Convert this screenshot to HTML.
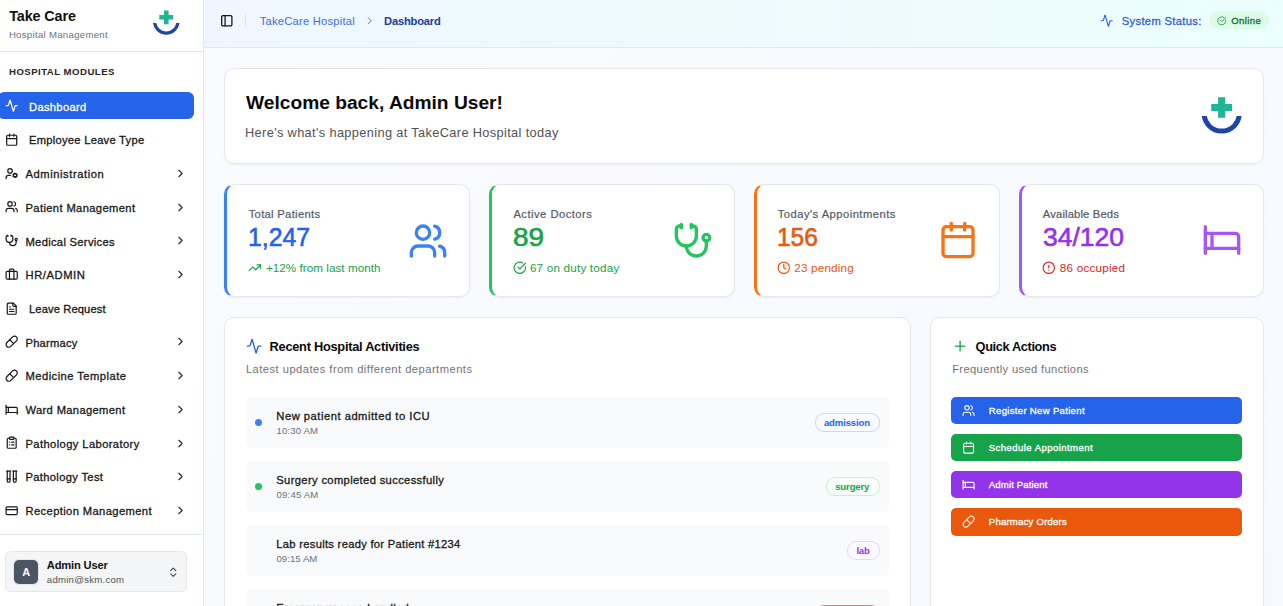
<!DOCTYPE html><html lang="en"><head>
<meta charset="utf-8">
<title>TakeCare Hospital - Dashboard</title>
<style>
*{box-sizing:border-box;margin:0;padding:0}
html,body{width:1283px;height:606px;overflow:hidden}
body{font-family:"Liberation Sans",sans-serif;color:#0a0a0a;background:#f9fbfe;position:relative}
svg{display:block}
.ico{position:absolute;fill:none;stroke:currentColor;stroke-width:2;stroke-linecap:round;stroke-linejoin:round}
.t{position:absolute;white-space:nowrap}
.md{font-weight:400;-webkit-text-stroke:0.3px currentColor}
.md2{font-weight:400;-webkit-text-stroke:0.18px currentColor}
.sb{font-weight:700}
.b{font-weight:700}
.num{font-weight:400;-webkit-text-stroke:0.6px currentColor}
#sidebar{position:absolute;left:0;top:0;width:204px;height:606px;background:#fff;border-right:1px solid #e5e7eb;overflow:hidden}
#sb-head{position:absolute;left:0;top:0;width:203px;height:52px;border-bottom:1px solid #e5e7eb}
#sb-foot{position:absolute;left:0;top:534px;width:203px;height:72px;border-top:1px solid #e5e7eb}
#active{position:absolute;left:-2px;top:92.3px;width:195.7px;height:26.8px;border-radius:6px;background:#2563eb}
#header{position:absolute;left:204px;top:0;width:1079px;height:48px;background:linear-gradient(90deg,#eff6ff 0%,#ecfeff 100%);border-bottom:1px solid #e2e8f0}
#main{position:absolute;left:204px;top:48px;width:1079px;height:558px;background:linear-gradient(135deg,#f9fbfe 0%,#f6fafe 100%);overflow:hidden}
.card{position:absolute;background:#fff;border-radius:10px;box-shadow:0 1px 2px rgba(0,0,0,.05)}
.card::before{content:"";position:absolute;inset:0;border:1px solid #e5e7eb;border-radius:10px;pointer-events:none}
.stat::before{border-left:3px solid var(--c)}
.row{position:absolute;background:#f9fafb;border-radius:6px}
.badge{position:absolute;border-radius:9px;border:1px solid}
.qa{position:absolute;border-radius:5px;color:#fff}
</style>
</head>
<body>
<svg width="0" height="0" style="position:absolute"><defs><clipPath id="lc"><rect x="0" y="22.1" width="48" height="24"></rect></clipPath></defs></svg>

<div id="sidebar">
<div id="sb-head">
<div class="t b" style="top: 7px; font-size: 14.4px; line-height: 18px; color: rgb(17, 17, 17); left: 9.2px; letter-spacing: -0.116px;">Take Care</div>
<div class="t " style="top: 27.5px; font-size: 9.6px; line-height: 13px; color: rgb(107, 114, 128); left: 8.9px; letter-spacing: 0.302px;">Hospital Management</div>
<svg style="position:absolute;left:150px;top:8px" width="32" height="29.33" viewBox="-0.7 -0.5 48 44"><circle cx="23.7" cy="19.42" r="17.64" fill="none" stroke="#1d45a5" stroke-width="4.9" clip-path="url(#lc)"></circle><path d="M20.1 3.2h7.1v6.85h6.9v6.85h-6.9v6.8h-7.1v-6.8h-6.9v-6.85h6.9z" fill="#1fb495"></path></svg>
</div>
<div class="t sb" style="top: 65px; font-size: 9.6px; line-height: 13px; color: rgb(38, 38, 38); left: 9px; letter-spacing: 0.478px;">HOSPITAL MODULES</div>
<div id="active"></div>
<svg class="ico" style="left:5.30px;top:99.30px;width:13.4px;height:13.4px;color:#fff;stroke-width:2.15;" viewBox="0 0 24 24"><path d="M22 12h-2.48a2 2 0 0 0-1.93 1.46l-2.35 8.36a.25.25 0 0 1-.48 0L9.24 2.18a.25.25 0 0 0-.48 0l-2.35 8.36A2 2 0 0 1 4.49 12H2"></path></svg>
<div class="t md" style="top: 93.7px; font-size: 11.2px; line-height: 27px; color: rgb(255, 255, 255); left: 29px; letter-spacing: 0.311px;">Dashboard</div>
<svg class="ico" style="left:5.30px;top:133.00px;width:13.4px;height:13.4px;color:#171717;stroke-width:2.15;" viewBox="0 0 24 24"><path d="M8 2v4"></path><path d="M16 2v4"></path><rect width="18" height="18" x="3" y="4" rx="2"></rect><path d="M3 10h18"></path></svg>
<div class="t md" style="top: 127.4px; font-size: 11.2px; line-height: 27px; color: rgb(23, 23, 23); left: 29px; letter-spacing: 0.257px;">Employee Leave Type</div>
<svg class="ico" style="left:5.30px;top:166.70px;width:13.4px;height:13.4px;color:#171717;stroke-width:2.15;" viewBox="0 0 24 24"><circle cx="9" cy="7" r="4"></circle><path d="M10 15H6a4 4 0 0 0-4 4v2"></path><circle cx="18" cy="15" r="3"></circle><path d="m21.7 16.4-.9-.3"></path><path d="m15.2 13.9-.9-.3"></path><path d="m16.6 18.7.3-.9"></path><path d="m19.1 12.2.3-.9"></path><path d="m19.6 18.7-.4-1"></path><path d="m16.8 12.3-.4-1"></path><path d="m14.3 16.6 1-.4"></path><path d="m20.7 13.8 1-.4"></path></svg>
<div class="t md" style="top: 161.1px; font-size: 11.2px; line-height: 27px; color: rgb(23, 23, 23); left: 25.5px; letter-spacing: 0.565px;">Administration</div>
<svg class="ico" style="left:173.50px;top:166.90px;width:13px;height:13px;color:#262626;stroke-width:2;" viewBox="0 0 24 24"><path d="m9 18 6-6-6-6"></path></svg>
<svg class="ico" style="left:5.30px;top:200.40px;width:13.4px;height:13.4px;color:#171717;stroke-width:2.15;" viewBox="0 0 24 24"><path d="M16 21v-2a4 4 0 0 0-4-4H6a4 4 0 0 0-4 4v2"></path><circle cx="9" cy="7" r="4"></circle><path d="M22 21v-2a4 4 0 0 0-3-3.87"></path><path d="M16 3.13a4 4 0 0 1 0 7.75"></path></svg>
<div class="t md" style="top: 194.8px; font-size: 11.2px; line-height: 27px; color: rgb(23, 23, 23); left: 25.5px; letter-spacing: 0.369px;">Patient Management</div>
<svg class="ico" style="left:173.50px;top:200.60px;width:13px;height:13px;color:#262626;stroke-width:2;" viewBox="0 0 24 24"><path d="m9 18 6-6-6-6"></path></svg>
<svg class="ico" style="left:5.30px;top:234.10px;width:13.4px;height:13.4px;color:#171717;stroke-width:2.15;" viewBox="0 0 24 24"><path d="M11 2v2"></path><path d="M5 2v2"></path><path d="M5 3H4a2 2 0 0 0-2 2v4a6 6 0 0 0 12 0V5a2 2 0 0 0-2-2h-1"></path><path d="M8 15a6 6 0 0 0 12 0v-3"></path><circle cx="20" cy="10" r="2"></circle></svg>
<div class="t md" style="top: 228.5px; font-size: 11.2px; line-height: 27px; color: rgb(23, 23, 23); left: 25.5px; letter-spacing: 0.302px;">Medical Services</div>
<svg class="ico" style="left:173.50px;top:234.30px;width:13px;height:13px;color:#262626;stroke-width:2;" viewBox="0 0 24 24"><path d="m9 18 6-6-6-6"></path></svg>
<svg class="ico" style="left:5.30px;top:267.80px;width:13.4px;height:13.4px;color:#171717;stroke-width:2.15;" viewBox="0 0 24 24"><path d="M16 20V4a2 2 0 0 0-2-2h-4a2 2 0 0 0-2 2v16"></path><rect width="20" height="14" x="2" y="6" rx="2"></rect></svg>
<div class="t md" style="top: 262.2px; font-size: 11.2px; line-height: 27px; color: rgb(23, 23, 23); left: 25.5px; letter-spacing: 0.581px;">HR/ADMIN</div>
<svg class="ico" style="left:173.50px;top:268.00px;width:13px;height:13px;color:#262626;stroke-width:2;" viewBox="0 0 24 24"><path d="m9 18 6-6-6-6"></path></svg>
<svg class="ico" style="left:5.30px;top:301.50px;width:13.4px;height:13.4px;color:#171717;stroke-width:2.15;" viewBox="0 0 24 24"><path d="M15 2H6a2 2 0 0 0-2 2v16a2 2 0 0 0 2 2h12a2 2 0 0 0 2-2V7Z"></path><path d="M14 2v4a2 2 0 0 0 2 2h4"></path><path d="M10 9H8"></path><path d="M16 13H8"></path><path d="M16 17H8"></path></svg>
<div class="t md" style="top: 295.9px; font-size: 11.2px; line-height: 27px; color: rgb(23, 23, 23); left: 29px; letter-spacing: 0.112px;">Leave Request</div>
<svg class="ico" style="left:5.30px;top:335.20px;width:13.4px;height:13.4px;color:#171717;stroke-width:2.15;" viewBox="0 0 24 24"><path d="m10.5 20.5 10-10a4.95 4.95 0 1 0-7-7l-10 10a4.95 4.95 0 1 0 7 7Z"></path><path d="m8.5 8.5 7 7"></path></svg>
<div class="t md" style="top: 329.6px; font-size: 11.2px; line-height: 27px; color: rgb(23, 23, 23); left: 25.5px; letter-spacing: 0.219px;">Pharmacy</div>
<svg class="ico" style="left:173.50px;top:335.40px;width:13px;height:13px;color:#262626;stroke-width:2;" viewBox="0 0 24 24"><path d="m9 18 6-6-6-6"></path></svg>
<svg class="ico" style="left:5.30px;top:368.90px;width:13.4px;height:13.4px;color:#171717;stroke-width:2.15;" viewBox="0 0 24 24"><path d="m10.5 20.5 10-10a4.95 4.95 0 1 0-7-7l-10 10a4.95 4.95 0 1 0 7 7Z"></path><path d="m8.5 8.5 7 7"></path></svg>
<div class="t md" style="top: 363.3px; font-size: 11.2px; line-height: 27px; color: rgb(23, 23, 23); left: 25.5px; letter-spacing: 0.459px;">Medicine Template</div>
<svg class="ico" style="left:173.50px;top:369.10px;width:13px;height:13px;color:#262626;stroke-width:2;" viewBox="0 0 24 24"><path d="m9 18 6-6-6-6"></path></svg>
<svg class="ico" style="left:5.30px;top:402.60px;width:13.4px;height:13.4px;color:#171717;stroke-width:2.15;" viewBox="0 0 24 24"><path d="M2 4v16"></path><path d="M2 8h18a2 2 0 0 1 2 2v10"></path><path d="M2 17h20"></path><path d="M6 8v9"></path></svg>
<div class="t md" style="top: 397px; font-size: 11.2px; line-height: 27px; color: rgb(23, 23, 23); left: 25.5px; letter-spacing: 0.342px;">Ward Management</div>
<svg class="ico" style="left:173.50px;top:402.80px;width:13px;height:13px;color:#262626;stroke-width:2;" viewBox="0 0 24 24"><path d="m9 18 6-6-6-6"></path></svg>
<svg class="ico" style="left:5.30px;top:436.30px;width:13.4px;height:13.4px;color:#171717;stroke-width:2.15;" viewBox="0 0 24 24"><rect width="8" height="4" x="8" y="2" rx="1" ry="1"></rect><path d="M16 4h2a2 2 0 0 1 2 2v14a2 2 0 0 1-2 2H6a2 2 0 0 1-2-2V6a2 2 0 0 1 2-2h2"></path><path d="M12 11h4"></path><path d="M12 16h4"></path><path d="M8 11h.01"></path><path d="M8 16h.01"></path></svg>
<div class="t md" style="top: 430.7px; font-size: 11.2px; line-height: 27px; color: rgb(23, 23, 23); left: 25.5px; letter-spacing: 0.392px;">Pathology Laboratory</div>
<svg class="ico" style="left:173.50px;top:436.50px;width:13px;height:13px;color:#262626;stroke-width:2;" viewBox="0 0 24 24"><path d="m9 18 6-6-6-6"></path></svg>
<svg class="ico" style="left:5.30px;top:470.00px;width:13.4px;height:13.4px;color:#171717;stroke-width:2.15;" viewBox="0 0 24 24"><path d="M9 2v17.5A2.5 2.5 0 0 1 6.5 22A2.5 2.5 0 0 1 4 19.5V2"></path><path d="M20 2v17.5a2.5 2.5 0 0 1-2.5 2.5a2.5 2.5 0 0 1-2.5-2.5V2"></path><path d="M3 2h7"></path><path d="M14 2h7"></path><path d="M9 16H4"></path><path d="M20 16h-5"></path></svg>
<div class="t md" style="top: 464.4px; font-size: 11.2px; line-height: 27px; color: rgb(23, 23, 23); left: 25.5px; letter-spacing: 0.325px;">Pathology Test</div>
<svg class="ico" style="left:173.50px;top:470.20px;width:13px;height:13px;color:#262626;stroke-width:2;" viewBox="0 0 24 24"><path d="m9 18 6-6-6-6"></path></svg>
<svg class="ico" style="left:5.30px;top:503.70px;width:13.4px;height:13.4px;color:#171717;stroke-width:2.15;" viewBox="0 0 24 24"><rect width="20" height="14" x="2" y="5" rx="2"></rect><line x1="2" x2="22" y1="10" y2="10"></line></svg>
<div class="t md" style="top: 498.1px; font-size: 11.2px; line-height: 27px; color: rgb(23, 23, 23); left: 25.5px; letter-spacing: 0.38px;">Reception Management</div>
<svg class="ico" style="left:173.50px;top:503.90px;width:13px;height:13px;color:#262626;stroke-width:2;" viewBox="0 0 24 24"><path d="m9 18 6-6-6-6"></path></svg>
<div id="sb-foot">
<div style="position:absolute;left:5px;top:16.4px;width:182px;height:41px;border:1px solid #e5e7eb;border-radius:6px;background:#f4f5f7"></div>
<div class="t b" style="left:14.2px;top:25px;width:24px;height:24.2px;border-radius:5px;background:#4b5563;box-shadow:0 0 0 1px #e2e5ea;color:#fff;font-size:11px;text-align:center;line-height:24px">A</div>
<div class="t sb" style="top: 23.2px; font-size: 11.2px; line-height: 14px; color: rgb(17, 17, 17); left: 46.8px; letter-spacing: -0.193px;">Admin User</div>
<div class="t " style="top: 38.5px; font-size: 9.6px; line-height: 12px; color: rgb(82, 82, 82); left: 46.8px; letter-spacing: 0.246px;">admin@skm.com</div>
<svg class="ico" style="left:166.55px;top:30.65px;width:12.5px;height:12.5px;color:#404040;stroke-width:2;" viewBox="0 0 24 24"><path d="m7 15 5 5 5-5"></path><path d="m7 9 5-5 5 5"></path></svg>
</div>
</div>
<div id="header">
<svg class="ico" style="left:15.80px;top:14.10px;width:13.6px;height:13.6px;color:#171717;stroke-width:2.3;" viewBox="0 0 24 24"><rect width="18" height="18" x="3" y="3" rx="2"></rect><path d="M9 3v18"></path></svg>
<div style="position:absolute;left:40.69999999999999px;top:14px;width:1px;height:13.4px;background:#dbe3ee"></div>
<div class="t " style="top: 13.6px; font-size: 11.2px; line-height: 15px; color: rgb(59, 111, 224); left: 55.7px; letter-spacing: 0.23px;">TakeCare Hospital</div>
<svg class="ico" style="left:159.65px;top:15.25px;width:11.5px;height:11.5px;color:#6b7280;stroke-width:2;" viewBox="0 0 24 24"><path d="m9 18 6-6-6-6"></path></svg>
<div class="t sb" style="top: 13.6px; font-size: 11.2px; line-height: 15px; color: rgb(30, 58, 154); left: 180.1px; letter-spacing: -0.213px;">Dashboard</div>
<svg class="ico" style="left:896.40px;top:13.90px;width:13.4px;height:13.4px;color:#2563eb;stroke-width:2;" viewBox="0 0 24 24"><path d="M22 12h-2.48a2 2 0 0 0-1.93 1.46l-2.35 8.36a.25.25 0 0 1-.48 0L9.24 2.18a.25.25 0 0 0-.48 0l-2.35 8.36A2 2 0 0 1 4.49 12H2"></path></svg>
<div class="t md" style="top: 13.8px; font-size: 11.2px; line-height: 15px; color: rgb(47, 95, 214); left: 917.8px; letter-spacing: 0.329px;">System Status:</div>
<div style="position:absolute;left:1004.5999999999999px;top:11.2px;width:60.6px;height:18.2px;border-radius:9.1px;background:#dcfce7"></div>
<svg class="ico" style="left:1013.30px;top:15.80px;width:9.6px;height:9.6px;color:#15803d;stroke-width:2;" viewBox="0 0 24 24"><path d="M21.801 10A10 10 0 1 1 17 3.335"></path><path d="m9 11 3 3L22 4"></path></svg>
<div class="t md" style="top: 11.6px; font-size: 9.6px; line-height: 18px; color: rgb(22, 101, 52); left: 1027.3px; letter-spacing: 0.361px;">Online</div>
</div>
<div id="main">
<div class="card" style="left:20px;top:20px;width:1040px;height:96px">
<div class="t b" style="top: 21.8px; font-size: 19.2px; line-height: 26px; color: rgb(10, 10, 10); left: 22px;">Welcome back, Admin User!</div>
<div class="t " style="top: 55.8px; font-size: 12.8px; line-height: 17px; color: rgb(82, 82, 82); left: 21px; letter-spacing: 0.348px;">Here's what's happening at TakeCare Hospital today</div>
<svg style="position:absolute;left:974px;top:26px" width="48" height="44" viewBox="0 0 48 44"><circle cx="23.7" cy="19.42" r="17.64" fill="none" stroke="#1d45a5" stroke-width="4.9" clip-path="url(#lc)"></circle><path d="M20.1 3.2h7.1v6.85h6.9v6.85h-6.9v6.8h-7.1v-6.8h-6.9v-6.85h6.9z" fill="#1fb495"></path></svg>
</div>
<div class="card stat" style="--c:#3b82f6;left:20px;top:136px;width:246px;height:113px">
<div class="t md2" style="top: 22.6px; font-size: 11.2px; line-height: 15px; color: rgb(79, 87, 99); left: 24.7px; letter-spacing: 0.318px;">Total Patients</div>
<div class="t num" style="top: 37.6px; font-size: 25px; line-height: 30px; color: rgb(37, 99, 235); left: 24.01px; transform-origin: 0px 50%; transform: scaleX(0.9925);">1,247</div>
<svg class="ico" style="left:24.10px;top:76.90px;width:13.6px;height:13.6px;color:#16a34a;stroke-width:2.1;" viewBox="0 0 24 24"><polyline points="22 7 13.5 15.5 8.5 10.5 2 17"></polyline><polyline points="16 7 22 7 22 13"></polyline></svg>
<div class="t " style="top: 75.6px; font-size: 11.7px; line-height: 15px; color: rgb(22, 163, 74); left: 41.9px; letter-spacing: 0.031px;">+12% from last month</div>
<svg class="ico" style="left:184.40px;top:36.60px;width:40px;height:40px;color:#3b82f6;stroke-width:2;" viewBox="0 0 24 24"><path d="M16 21v-2a4 4 0 0 0-4-4H6a4 4 0 0 0-4 4v2"></path><circle cx="9" cy="7" r="4"></circle><path d="M22 21v-2a4 4 0 0 0-3-3.87"></path><path d="M16 3.13a4 4 0 0 1 0 7.75"></path></svg>
</div>
<div class="card stat" style="--c:#22c55e;left:285px;top:136px;width:246px;height:113px">
<div class="t md2" style="top: 22.6px; font-size: 11.2px; line-height: 15px; color: rgb(79, 87, 99); left: 24.4px; letter-spacing: 0.49px;">Active Doctors</div>
<div class="t num" style="top: 37.6px; font-size: 25px; line-height: 30px; color: rgb(22, 163, 74); left: 23.58px; transform-origin: 0px 50%; transform: scaleX(1.1195);">89</div>
<svg class="ico" style="left:23.80px;top:76.90px;width:13.6px;height:13.6px;color:#16a34a;stroke-width:2.1;" viewBox="0 0 24 24"><path d="M21.801 10A10 10 0 1 1 17 3.335"></path><path d="m9 11 3 3L22 4"></path></svg>
<div class="t " style="top: 75.6px; font-size: 11.7px; line-height: 15px; color: rgb(22, 163, 74); left: 40.9px; letter-spacing: 0.195px;">67 on duty today</div>
<svg class="ico" style="left:183.60px;top:36.80px;width:40px;height:40px;color:#22c55e;stroke-width:2;" viewBox="0 0 24 24"><path d="M11 2v2"></path><path d="M5 2v2"></path><path d="M5 3H4a2 2 0 0 0-2 2v4a6 6 0 0 0 12 0V5a2 2 0 0 0-2-2h-1"></path><path d="M8 15a6 6 0 0 0 12 0v-3"></path><circle cx="20" cy="10" r="2"></circle></svg>
</div>
<div class="card stat" style="--c:#f97316;left:550px;top:136px;width:246px;height:113px">
<div class="t md2" style="top: 22.6px; font-size: 11.2px; line-height: 15px; color: rgb(79, 87, 99); left: 23.7px; letter-spacing: 0.484px;">Today's Appointments</div>
<div class="t num" style="top: 37.6px; font-size: 25px; line-height: 30px; color: rgb(234, 88, 12); left: 23.02px; transform-origin: 0px 50%; transform: scaleX(0.9797);">156</div>
<svg class="ico" style="left:23.10px;top:76.90px;width:13.6px;height:13.6px;color:#ea580c;stroke-width:2.1;" viewBox="0 0 24 24"><circle cx="12" cy="12" r="10"></circle><polyline points="12 6 12 12 16 14"></polyline></svg>
<div class="t " style="top: 75.6px; font-size: 11.7px; line-height: 15px; color: rgb(234, 88, 12); left: 40.3px; letter-spacing: 0.173px;">23 pending</div>
<svg class="ico" style="left:183.60px;top:36.20px;width:40px;height:40px;color:#f97316;stroke-width:2;" viewBox="0 0 24 24"><path d="M8 2v4"></path><path d="M16 2v4"></path><rect width="18" height="18" x="3" y="4" rx="2"></rect><path d="M3 10h18"></path></svg>
</div>
<div class="card stat" style="--c:#a855f7;left:815px;top:136px;width:245px;height:113px">
<div class="t md2" style="top: 22.6px; font-size: 11.2px; line-height: 15px; color: rgb(79, 87, 99); left: 23.8px; letter-spacing: 0.168px;">Available Beds</div>
<div class="t num" style="top: 37.6px; font-size: 25px; line-height: 30px; color: rgb(147, 51, 234); left: 24.1px; transform-origin: 0px 50%; transform: scaleX(1.0587);">34/120</div>
<svg class="ico" style="left:23.20px;top:76.90px;width:13.6px;height:13.6px;color:#dc2626;stroke-width:2.1;" viewBox="0 0 24 24"><circle cx="12" cy="12" r="10"></circle><line x1="12" x2="12" y1="8" y2="12"></line><line x1="12" x2="12.01" y1="16" y2="16"></line></svg>
<div class="t " style="top: 75.6px; font-size: 11.7px; line-height: 15px; color: rgb(220, 38, 38); left: 40.8px; letter-spacing: 0.227px;">86 occupied</div>
<svg class="ico" style="left:183.20px;top:36.30px;width:40px;height:40px;color:#a855f7;stroke-width:2;" viewBox="0 0 24 24"><path d="M2 4v16"></path><path d="M2 8h18a2 2 0 0 1 2 2v10"></path><path d="M2 17h20"></path><path d="M6 8v9"></path></svg>
</div>
<div class="card" style="left:20px;top:269px;width:687px;height:300px">
<svg class="ico" style="left:21.70px;top:21.40px;width:16.2px;height:16.2px;color:#2563eb;stroke-width:2;" viewBox="0 0 24 24"><path d="M22 12h-2.48a2 2 0 0 0-1.93 1.46l-2.35 8.36a.25.25 0 0 1-.48 0L9.24 2.18a.25.25 0 0 0-.48 0l-2.35 8.36A2 2 0 0 1 4.49 12H2"></path></svg>
<div class="t sb" style="top: 20.9px; font-size: 12.8px; line-height: 17px; color: rgb(10, 10, 10); left: 45.6px; letter-spacing: -0.266px;">Recent Hospital Activities</div>
<div class="t " style="top: 44.6px; font-size: 11.2px; line-height: 15px; color: rgb(115, 115, 115); left: 21.9px; letter-spacing: 0.465px;">Latest updates from different departments</div>
<div class="row" style="left:21.7px;top:80.3px;width:643.6px;height:51.2px">
<div style="position:absolute;left:9px;top:22px;width:7px;height:7px;border-radius:50%;background:#3b82f6"></div>
<div class="t md" style="top: 11.8px; font-size: 11.2px; line-height: 15px; color: rgb(23, 23, 23); left: 30.61px; letter-spacing: 0.514px;">New patient admitted to ICU</div>
<div class="t " style="top: 27.6px; font-size: 9.6px; line-height: 12px; color: rgb(107, 114, 128); left: 30.81px; letter-spacing: 0.133px;">10:30 AM</div>
<div class="badge" style="left:569.1px;top:16px;width:64.8px;height:18.4px;border-color:#bfdbfe;background:#f8fbff"></div>
<div class="t sb" style="top: 18.4px; font-size: 9.6px; line-height: 14px; color: rgb(37, 99, 235); left: 578.21px; letter-spacing: -0.149px;">admission</div>
</div>
<div class="row" style="left:21.7px;top:144.3px;width:643.6px;height:51.2px">
<div style="position:absolute;left:9px;top:22px;width:7px;height:7px;border-radius:50%;background:#22c55e"></div>
<div class="t md" style="top: 11.8px; font-size: 11.2px; line-height: 15px; color: rgb(23, 23, 23); left: 30.61px; letter-spacing: 0.354px;">Surgery completed successfully</div>
<div class="t " style="top: 27.6px; font-size: 9.6px; line-height: 12px; color: rgb(107, 114, 128); left: 30.81px; letter-spacing: 0.19px;">09:45 AM</div>
<div class="badge" style="left:580.5px;top:16px;width:53.4px;height:18.4px;border-color:#bbf7d0;background:#f8fefa"></div>
<div class="t sb" style="top: 18.4px; font-size: 9.6px; line-height: 14px; color: rgb(22, 163, 74); left: 589.51px; letter-spacing: -0.16px;">surgery</div>
</div>
<div class="row" style="left:21.7px;top:208.3px;width:643.6px;height:51.2px">
<div class="t md" style="top: 11.8px; font-size: 11.2px; line-height: 15px; color: rgb(23, 23, 23); left: 30.61px; letter-spacing: 0.291px;">Lab results ready for Patient #1234</div>
<div class="t " style="top: 27.6px; font-size: 9.6px; line-height: 12px; color: rgb(107, 114, 128); left: 30.81px; letter-spacing: 0.047px;">09:15 AM</div>
<div class="badge" style="left:601.8px;top:16px;width:32.1px;height:18.4px;border-color:#e9d5ff;background:#fdfaff"></div>
<div class="t sb" style="top: 18.4px; font-size: 9.6px; line-height: 14px; color: rgb(147, 51, 234); left: 610.81px; letter-spacing: -0.301px;">lab</div>
</div>
<div class="row" style="left:21.7px;top:272.3px;width:643.6px;height:51.2px">
<div class="t md" style="top: 11.8px; font-size: 11.2px; line-height: 15px; color: rgb(23, 23, 23); left: 30.61px; letter-spacing: 0.299px;">Emergency case handled</div>
<div class="t " style="top: 27.6px; font-size: 9.6px; line-height: 12px; color: rgb(107, 114, 128); left: 30.81px; letter-spacing: 0.133px;">08:50 AM</div>
<div class="badge" style="left:569.6px;top:16px;width:64.3px;height:18.4px;border-color:#f87171;background:#f87171"></div>
<div class="t sb" style="top: 18.4px; font-size: 9.6px; line-height: 14px; color: rgb(255, 255, 255); left: 578.31px; letter-spacing: -0.628px;">emergency</div>
</div>
</div>
<div class="card" style="left:726px;top:269px;width:334px;height:300px">
<svg class="ico" style="left:21.90px;top:21.20px;width:16.2px;height:16.2px;color:#16a34a;stroke-width:2;" viewBox="0 0 24 24"><path d="M5 12h14"></path><path d="M12 5v14"></path></svg>
<div class="t sb" style="top: 20.9px; font-size: 12.8px; line-height: 17px; color: rgb(10, 10, 10); left: 45.6px; letter-spacing: -0.385px;">Quick Actions</div>
<div class="t " style="top: 44.6px; font-size: 11.2px; line-height: 15px; color: rgb(115, 115, 115); left: 22.2px; letter-spacing: 0.345px;">Frequently used functions</div>
<div class="qa" style="left:21.4px;top:80.0px;width:290.9px;height:27.2px;background:#2563eb">
<svg class="ico" style="left:10.90px;top:6.90px;width:13.2px;height:13.2px;color:#fff;stroke-width:2;" viewBox="0 0 24 24"><path d="M16 21v-2a4 4 0 0 0-4-4H6a4 4 0 0 0-4 4v2"></path><circle cx="9" cy="7" r="4"></circle><path d="M22 21v-2a4 4 0 0 0-3-3.87"></path><path d="M16 3.13a4 4 0 0 1 0 7.75"></path></svg>
<div class="t md" style="top: 0px; font-size: 9.6px; line-height: 27px; color: rgb(255, 255, 255); left: 37.41px; letter-spacing: 0.297px;">Register New Patient</div>
</div>
<div class="qa" style="left:21.4px;top:117.2px;width:290.9px;height:27.2px;background:#16a34a">
<svg class="ico" style="left:10.90px;top:6.90px;width:13.2px;height:13.2px;color:#fff;stroke-width:2;" viewBox="0 0 24 24"><path d="M8 2v4"></path><path d="M16 2v4"></path><rect width="18" height="18" x="3" y="4" rx="2"></rect><path d="M3 10h18"></path></svg>
<div class="t md" style="top: 0px; font-size: 9.6px; line-height: 27px; color: rgb(255, 255, 255); left: 37.41px; letter-spacing: 0.412px;">Schedule Appointment</div>
</div>
<div class="qa" style="left:21.4px;top:154.3px;width:290.9px;height:27.2px;background:#9333ea">
<svg class="ico" style="left:10.90px;top:6.90px;width:13.2px;height:13.2px;color:#fff;stroke-width:2;" viewBox="0 0 24 24"><path d="M2 4v16"></path><path d="M2 8h18a2 2 0 0 1 2 2v10"></path><path d="M2 17h20"></path><path d="M6 8v9"></path></svg>
<div class="t md" style="top: 0px; font-size: 9.6px; line-height: 27px; color: rgb(255, 255, 255); left: 37.41px; letter-spacing: 0.126px;">Admit Patient</div>
</div>
<div class="qa" style="left:21.4px;top:191.4px;width:290.9px;height:27.2px;background:#ea580c">
<svg class="ico" style="left:10.90px;top:6.90px;width:13.2px;height:13.2px;color:#fff;stroke-width:2;" viewBox="0 0 24 24"><path d="m10.5 20.5 10-10a4.95 4.95 0 1 0-7-7l-10 10a4.95 4.95 0 1 0 7 7Z"></path><path d="m8.5 8.5 7 7"></path></svg>
<div class="t md" style="top: 0px; font-size: 9.6px; line-height: 27px; color: rgb(255, 255, 255); left: 37.41px; letter-spacing: 0.202px;">Pharmacy Orders</div>
</div>
</div>
</div>

</body></html>
